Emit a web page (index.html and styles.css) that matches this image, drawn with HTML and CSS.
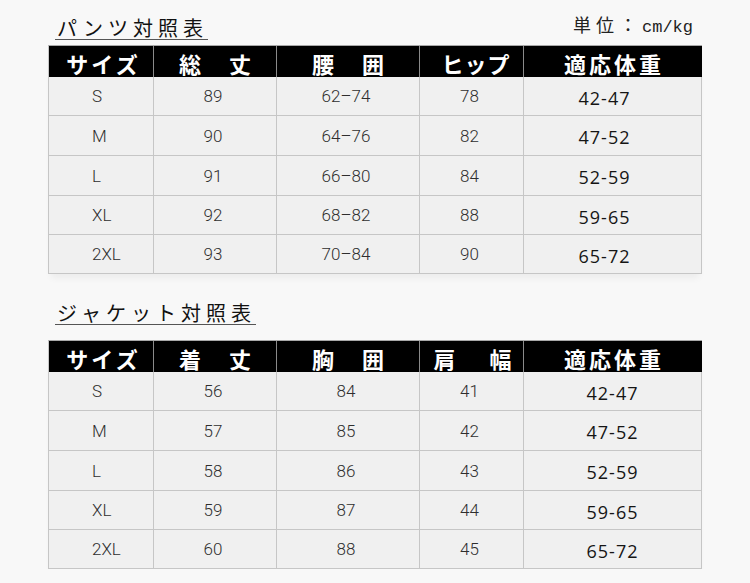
FILE: index.html
```html
<!DOCTYPE html>
<html lang="ja">
<head>
<meta charset="utf-8">
<title>サイズ対照表</title>
<link rel="stylesheet" href="styles.css">
</head>
<body>
<div class="page">
  <section class="chart chart--pants">
    <div class="chart-head">
      <h2 class="chart-title">パンツ対照表</h2>
      <span class="unit">単位：<span class="unit-latin">cm/kg</span></span>
    </div>
    <div class="sheet">
      <div class="th th--first">サイズ</div>
      <div class="th">総　丈</div>
      <div class="th">腰　囲</div>
      <div class="th th--narrow">ヒップ</div>
      <div class="th th--last">適応体重</div>

      <div class="td size">S</div><div class="td">89</div><div class="td">62–74</div><div class="td">78</div><div class="td weight">42-47</div>
      <div class="td size">M</div><div class="td">90</div><div class="td">64–76</div><div class="td">82</div><div class="td weight">47-52</div>
      <div class="td size">L</div><div class="td">91</div><div class="td">66–80</div><div class="td">84</div><div class="td weight">52-59</div>
      <div class="td size">XL</div><div class="td">92</div><div class="td">68–82</div><div class="td">88</div><div class="td weight">59-65</div>
      <div class="td size">2XL</div><div class="td">93</div><div class="td">70–84</div><div class="td">90</div><div class="td weight">65-72</div>
    </div>
  </section>

  <section class="chart chart--jackets">
    <div class="chart-head">
      <h2 class="chart-title">ジャケット対照表</h2>
    </div>
    <div class="sheet">
      <div class="th th--first">サイズ</div>
      <div class="th">着　丈</div>
      <div class="th">胸　囲</div>
      <div class="th th--wide">肩　幅</div>
      <div class="th th--last">適応体重</div>

      <div class="td size">S</div><div class="td">56</div><div class="td">84</div><div class="td">41</div><div class="td weight">42-47</div>
      <div class="td size">M</div><div class="td">57</div><div class="td">85</div><div class="td">42</div><div class="td weight">47-52</div>
      <div class="td size">L</div><div class="td">58</div><div class="td">86</div><div class="td">43</div><div class="td weight">52-59</div>
      <div class="td size">XL</div><div class="td">59</div><div class="td">87</div><div class="td">44</div><div class="td weight">59-65</div>
      <div class="td size">2XL</div><div class="td">60</div><div class="td">88</div><div class="td">45</div><div class="td weight">65-72</div>
    </div>
  </section>
</div>
</body>
</html>
```

FILE: styles.css
```css
html, body {
  margin: 0;
  padding: 0;
}

body {
  background: #f8f8f8;
  font-family: "Noto Sans CJK JP", "Noto Sans", sans-serif;
  color: #222;
}

.page {
  padding: 17px 0 0 48px;
}

.chart-head {
  width: 654px;
  box-sizing: border-box;
  height: 23px;
  padding: 0 9px 0 7px;
  display: flex;
  justify-content: space-between;
  align-items: flex-end;
  margin-bottom: 5px;
}

.chart-title {
  margin: 0;
  padding: 0 0 0 2px;
  font-size: 20px;
  font-weight: 400;
  line-height: 22px;
  letter-spacing: 5px;
  color: #111;
  border-bottom: 1px solid #555;
}

.unit {
  font-size: 18px;
  line-height: 22px;
  letter-spacing: 5px;
  color: #222;
  padding-bottom: 1px;
}

.unit-latin {
  font-family: "Liberation Mono", monospace;
  font-size: 17px;
  letter-spacing: 0;
}

.chart--jackets {
  margin-top: 28px;
}

.chart--jackets .chart-head {
  margin-bottom: 15px;
}

.sheet {
  width: 654px;
  box-sizing: border-box;
  display: grid;
  grid-template-columns: 105px 123px 143px 104px 178px;
  grid-template-rows: 31px 39px 40px 40px 39px 39px;
  border-left: 1px solid #c6c6c6;
  border-top: 1px solid #a8a8a8;
  background: #f0f0f0;
  box-shadow: 0 7px 7px -3px rgba(0, 0, 0, 0.05);
}

.th {
  background: #000;
  color: #fff;
  font-size: 22px;
  font-weight: 700;
  line-height: 26px;
  letter-spacing: 3px;
  padding-left: 3px;
  border-right: 1px solid #8a8a8a;
  display: flex;
  align-items: flex-end;
  justify-content: center;
  padding-bottom: 1px;
}

.th--first {
  padding-left: 5px;
}

.th--narrow {
  letter-spacing: 1px;
  padding-left: 9px;
}

.th--wide {
  letter-spacing: 6px;
  padding-left: 8px;
}

.th--last {
  border-right: 1px solid #000;
}

.td {
  box-sizing: border-box;
  border-right: 1px solid #c6c6c6;
  border-bottom: 1px solid #c6c6c6;
  display: flex;
  align-items: center;
  justify-content: center;
  padding-right: 4px;
  font-family: Roboto, "Liberation Sans", sans-serif;
  font-weight: 300;
  font-size: 17px;
  color: #2e2e2e;
}

.size {
  justify-content: flex-start;
  padding-left: 43px;
}

.weight {
  font-family: "Open Sans", "Noto Sans", sans-serif;
  font-weight: 400;
  font-size: 18px;
  letter-spacing: 1px;
  color: #151515;
  padding-top: 3px;
  padding-right: 16px;
}

.chart--jackets .weight {
  padding-right: 0;
}
```
